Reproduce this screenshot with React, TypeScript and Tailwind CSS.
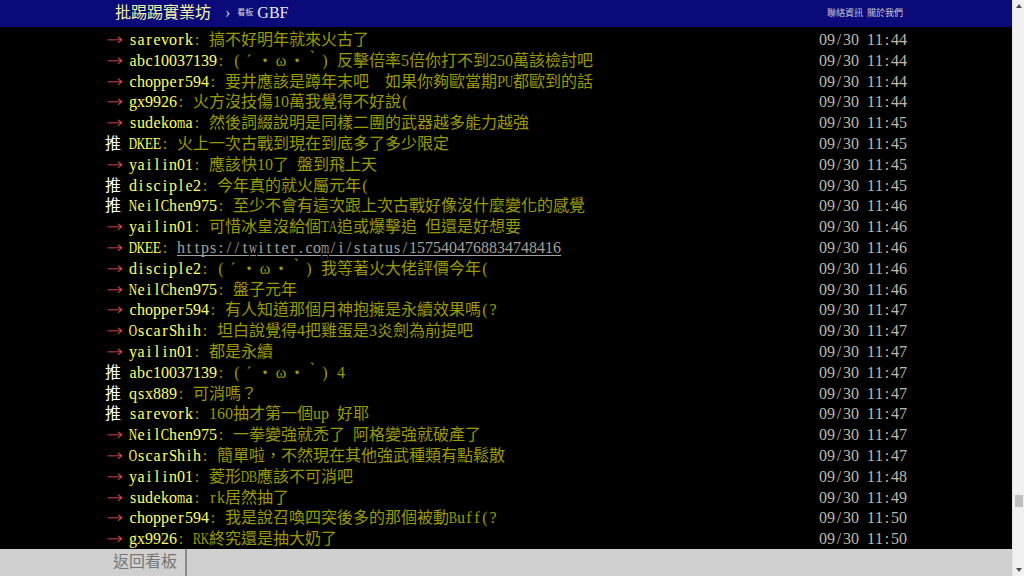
import clsx from 'clsx';

type Push = { tag: '推' | '→'; user: string; text: string; time: string; link?: boolean };

const pushes: Push[] = [
  { tag: '→', user: 'sarevork', text: '搞不好明年就來火古了', time: '09/30 11:44' },
  { tag: '→', user: 'abc10037139', text: '(´・ω・｀) 反擊倍率5倍你打不到250萬該檢討吧', time: '09/30 11:44' },
  { tag: '→', user: 'chopper594', text: '要井應該是蹲年末吧　如果你夠歐當期PU都歐到的話', time: '09/30 11:44' },
  { tag: '→', user: 'gx9926', text: '火方沒技傷10萬我覺得不好說(', time: '09/30 11:44' },
  { tag: '→', user: 'sudekoma', text: '然後詞綴說明是同樣二團的武器越多能力越強', time: '09/30 11:45' },
  { tag: '推', user: 'DKEE', text: '火上一次古戰到現在到底多了多少限定', time: '09/30 11:45' },
  { tag: '→', user: 'yailin01', text: '應該快10了 盤到飛上天', time: '09/30 11:45' },
  { tag: '推', user: 'disciple2', text: '今年真的就火屬元年(', time: '09/30 11:45' },
  { tag: '推', user: 'NeilChen975', text: '至少不會有這次跟上次古戰好像沒什麼變化的感覺', time: '09/30 11:46' },
  { tag: '→', user: 'yailin01', text: '可惜冰皇沒給個TA追或爆擊追 但還是好想要', time: '09/30 11:46' },
  { tag: '→', user: 'DKEE', text: 'https://twitter.com/i/status/1575404768834748416', time: '09/30 11:46', link: true },
  { tag: '→', user: 'disciple2', text: '(´・ω・｀) 我等著火大佬評價今年(', time: '09/30 11:46' },
  { tag: '→', user: 'NeilChen975', text: '盤子元年', time: '09/30 11:46' },
  { tag: '→', user: 'chopper594', text: '有人知道那個月神抱擁是永續效果嗎(?', time: '09/30 11:47' },
  { tag: '→', user: 'OscarShih', text: '坦白說覺得4把雞蛋是3炎劍為前提吧', time: '09/30 11:47' },
  { tag: '→', user: 'yailin01', text: '都是永續', time: '09/30 11:47' },
  { tag: '推', user: 'abc10037139', text: '(´・ω・｀) 4', time: '09/30 11:47' },
  { tag: '推', user: 'qsx889', text: '可消嗎？', time: '09/30 11:47' },
  { tag: '推', user: 'sarevork', text: '160抽才第一個up 好耶', time: '09/30 11:47' },
  { tag: '→', user: 'NeilChen975', text: '一拳變強就禿了 阿格變強就破產了', time: '09/30 11:47' },
  { tag: '→', user: 'OscarShih', text: '簡單啦，不然現在其他強武種類有點鬆散', time: '09/30 11:47' },
  { tag: '→', user: 'yailin01', text: '菱形DB應該不可消吧', time: '09/30 11:48' },
  { tag: '→', user: 'sudekoma', text: 'rk居然抽了', time: '09/30 11:49' },
  { tag: '→', user: 'chopper594', text: '我是說召喚四突後多的那個被動Buff(?', time: '09/30 11:50' },
  { tag: '→', user: 'gx9926', text: 'RK終究還是抽大奶了', time: '09/30 11:50' },
];

// half-width cells are 8px; squeeze the wide serif glyphs so they fit like the terminal font
const SCALE: Record<string, string> = {};
const groups: [string, string][] = [
  ['ADGHKNOQUVXYw', 'scale-x-[0.72]'],
  ['m', 'scale-x-[0.66]'],
  ['BCR', 'scale-x-[0.78]'],
  ['ELTZ', 'scale-x-[0.85]'],
  ['FPS', 'scale-x-[0.92]'],
  ['M', 'scale-x-[0.6]'],
  ['W', 'scale-x-[0.56]'],
];
for (const [chars, cls] of groups) for (const c of chars) SCALE[c] = cls;

function Cells({ text, className }: { text: string; className?: string }) {
  return (
    <span className="inline-flex">
      {Array.from(text).map((ch, i) =>
        ch.charCodeAt(0) < 128 ? (
          <span key={i} className={clsx('inline-flex w-2 justify-center', SCALE[ch], className)}>
            {ch === ' ' ? '\u00a0' : ch}
          </span>
        ) : (
          <span key={i} className={clsx('inline-flex w-4 justify-center', className)}>
            {ch}
          </span>
        )
      )}
    </span>
  );
}

function PushRow({ p }: { p: Push }) {
  return (
    <div className="flex h-[20.8px] items-baseline whitespace-nowrap pt-[1px]">
      {p.tag === '推' ? (
        <span className="inline-flex text-white">
          <Cells text="推 " />
        </span>
      ) : (
        <span className="inline-flex w-6">
          <span className="inline-flex origin-left scale-x-[1.25] pl-[1px] font-['DejaVu_Sans'] font-light text-[#e85454]">
            →
          </span>
        </span>
      )}
      <span className="inline-flex text-[#ff6]">
        <Cells text={p.user} />
      </span>
      <span className="inline-flex text-[#990]">
        <Cells text=": " />
        {p.link ? (
          <Cells
            text={p.text}
            className="text-[#a0a0a0] shadow-[inset_0_-3px_0_#000,inset_0_-4px_0_#a0a0a0]"
          />
        ) : (
          <Cells text={p.text} />
        )}
      </span>
      <span className="ml-auto inline-flex text-[#bdb8b0]">
        <Cells text={p.time} />
      </span>
    </div>
  );
}

function Scrollbar() {
  return (
    <div className="flex w-[12px] shrink-0 flex-col items-center border-l border-[#e4e4e4] bg-[#f1f1f1]">
      <div className="flex h-[12px] items-center justify-center">
        <svg width="6" height="4" viewBox="0 0 6 4">
          <path d="M3 0L6 4H0z" fill="#505050" />
        </svg>
      </div>
      <div className="flex-1" />
      <div className="h-[12px] w-[8px] bg-[#c1c1c1]" />
      <div className="h-[57px]" />
      <div className="flex h-[12px] items-center justify-center">
        <svg width="6" height="4" viewBox="0 0 6 4">
          <path d="M0 0H6L3 4z" fill="#505050" />
        </svg>
      </div>
    </div>
  );
}

export default function App() {
  return (
    <div className="flex h-screen w-full overflow-hidden bg-black font-['Liberation_Serif','Noto_Sans_CJK_TC',serif] text-[16px] leading-[20.8px]">
      <div className="flex min-w-0 flex-1 flex-col">
        {/* Top bar */}
        <header className="h-[27px] shrink-0 bg-[#0a0a7a]">
          <div className="mx-auto flex h-full w-[802px] items-center pl-[10px] pr-[4px]">
            <span className="text-[#f5f5a0]">批踢踢實業坊</span>
            <span className="ml-[14px] text-[#ccc]">›</span>
            <span className="ml-[7px] text-[8px] text-[#ddd]">看板</span>
            <span className="ml-[4px] text-[#e8e8f0]">GBF</span>
            <div className="ml-auto flex gap-[4px] text-[9px] text-[#c8c8d8]">
              <span>聯絡資訊</span>
              <span>關於我們</span>
            </div>
          </div>
        </header>

        {/* Pushes */}
        <main className="flex flex-1 flex-col justify-end overflow-hidden">
          <div className="mx-auto w-[802px]">
            {pushes.map((p, i) => (
              <PushRow key={i} p={p} />
            ))}
          </div>
        </main>

        {/* Bottom nav */}
        <footer className="h-[27px] shrink-0 bg-[#d0d0d0]">
          <div className="mx-auto flex h-full w-[802px]">
            <span className="flex items-center border-r-2 border-[#8a8a8a] px-2 text-[#777]">返回看板</span>
          </div>
        </footer>
      </div>
      <Scrollbar />
    </div>
  );
}
